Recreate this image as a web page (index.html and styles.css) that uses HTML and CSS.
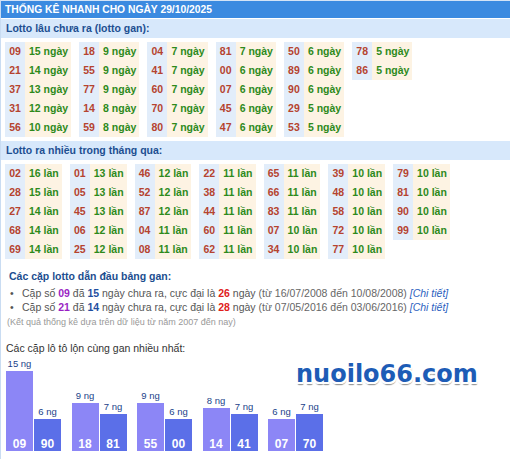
FILE: index.html
```html
<!DOCTYPE html>
<html lang="vi">
<head>
<meta charset="utf-8">
<title>Thống kê nhanh</title>
<link rel="stylesheet" href="styles.css">
</head>
<body>
<div class="page">
  <div class="hdr">THỐNG KÊ NHANH CHO NGÀY 29/10/2025</div>
  <div class="sub">Lotto lâu chưa ra (lotto gan):</div>
  <div class="blocks">
    <div class="blk"><span class="n">09</span><span class="v">15 ngày</span><span class="n">21</span><span class="v">14 ngày</span><span class="n">37</span><span class="v">13 ngày</span><span class="n">31</span><span class="v">12 ngày</span><span class="n">56</span><span class="v">10 ngày</span></div>
    <div class="blk"><span class="n">18</span><span class="v">9 ngày</span><span class="n">55</span><span class="v">9 ngày</span><span class="n">77</span><span class="v">9 ngày</span><span class="n">14</span><span class="v">8 ngày</span><span class="n">59</span><span class="v">8 ngày</span></div>
    <div class="blk"><span class="n">04</span><span class="v">7 ngày</span><span class="n">41</span><span class="v">7 ngày</span><span class="n">60</span><span class="v">7 ngày</span><span class="n">70</span><span class="v">7 ngày</span><span class="n">80</span><span class="v">7 ngày</span></div>
    <div class="blk"><span class="n">81</span><span class="v">7 ngày</span><span class="n">00</span><span class="v">6 ngày</span><span class="n">07</span><span class="v">6 ngày</span><span class="n">45</span><span class="v">6 ngày</span><span class="n">47</span><span class="v">6 ngày</span></div>
    <div class="blk"><span class="n">50</span><span class="v">6 ngày</span><span class="n">89</span><span class="v">6 ngày</span><span class="n">90</span><span class="v">6 ngày</span><span class="n">29</span><span class="v">5 ngày</span><span class="n">53</span><span class="v">5 ngày</span></div>
    <div class="blk"><span class="n">78</span><span class="v">5 ngày</span><span class="n">86</span><span class="v">5 ngày</span></div>
  </div>
  <div class="sub">Lotto ra nhiều trong tháng qua:</div>
  <div class="blocks">
    <div class="blk"><span class="n">02</span><span class="v">16 lần</span><span class="n">28</span><span class="v">15 lần</span><span class="n">27</span><span class="v">14 lần</span><span class="n">68</span><span class="v">14 lần</span><span class="n">69</span><span class="v">14 lần</span></div>
    <div class="blk"><span class="n">01</span><span class="v">13 lần</span><span class="n">05</span><span class="v">13 lần</span><span class="n">45</span><span class="v">13 lần</span><span class="n">06</span><span class="v">12 lần</span><span class="n">25</span><span class="v">12 lần</span></div>
    <div class="blk"><span class="n">46</span><span class="v">12 lần</span><span class="n">52</span><span class="v">12 lần</span><span class="n">87</span><span class="v">12 lần</span><span class="n">04</span><span class="v">11 lần</span><span class="n">08</span><span class="v">11 lần</span></div>
    <div class="blk"><span class="n">22</span><span class="v">11 lần</span><span class="n">38</span><span class="v">11 lần</span><span class="n">44</span><span class="v">11 lần</span><span class="n">60</span><span class="v">11 lần</span><span class="n">62</span><span class="v">11 lần</span></div>
    <div class="blk"><span class="n">65</span><span class="v">11 lần</span><span class="n">66</span><span class="v">11 lần</span><span class="n">83</span><span class="v">11 lần</span><span class="n">07</span><span class="v">10 lần</span><span class="n">34</span><span class="v">10 lần</span></div>
    <div class="blk"><span class="n">39</span><span class="v">10 lần</span><span class="n">48</span><span class="v">10 lần</span><span class="n">58</span><span class="v">10 lần</span><span class="n">72</span><span class="v">10 lần</span><span class="n">77</span><span class="v">10 lần</span></div>
    <div class="blk"><span class="n">79</span><span class="v">10 lần</span><span class="n">81</span><span class="v">10 lần</span><span class="n">90</span><span class="v">10 lần</span><span class="n">99</span><span class="v">10 lần</span></div>
  </div>
  <div class="lead">
    <div class="lead-title">Các cặp lotto dẫn đầu bảng gan:</div>
    <div class="li"><span class="dot">•</span>Cặp số <b class="p">09</b> đã <b class="b">15</b> ngày chưa ra, cực đại là <b class="r">26</b> ngày <span class="g">(từ 16/07/2008 đến 10/08/2008)</span> <i class="lk">[Chi tiết]</i></div>
    <div class="li"><span class="dot">•</span>Cặp số <b class="p">21</b> đã <b class="b">14</b> ngày chưa ra, cực đại là <b class="r">28</b> ngày <span class="g">(từ 07/05/2016 đến 03/06/2016)</span> <i class="lk">[Chi tiết]</i></div>
    <div class="note">(Kết quả thống kê dựa trên dữ liệu từ năm 2007 đến nay)</div>
  </div>
  <div class="pairs">
    <div class="pairs-title">Các cặp lô tô lộn cùng gan nhiều nhất:</div>
    <div class="chart">
      <div class="pair">
        <div class="col"><span class="lbl">15 ng</span><div class="bar a" style="height:80px">09</div></div>
        <div class="col"><span class="lbl">6 ng</span><div class="bar c" style="height:32px">90</div></div>
      </div>
      <div class="pair">
        <div class="col"><span class="lbl">9 ng</span><div class="bar a" style="height:48px">18</div></div>
        <div class="col"><span class="lbl">7 ng</span><div class="bar c" style="height:37px">81</div></div>
      </div>
      <div class="pair">
        <div class="col"><span class="lbl">9 ng</span><div class="bar a" style="height:48px">55</div></div>
        <div class="col"><span class="lbl">6 ng</span><div class="bar c" style="height:32px">00</div></div>
      </div>
      <div class="pair">
        <div class="col"><span class="lbl">8 ng</span><div class="bar a" style="height:43px">14</div></div>
        <div class="col"><span class="lbl">7 ng</span><div class="bar c" style="height:37px">41</div></div>
      </div>
      <div class="pair">
        <div class="col"><span class="lbl">6 ng</span><div class="bar a" style="height:32px">07</div></div>
        <div class="col"><span class="lbl">7 ng</span><div class="bar c" style="height:37px">70</div></div>
      </div>
    </div>
    <div class="logo">nuoilo66.com</div>
  </div>
</div>
</body>
</html>
```

FILE: styles.css
```css
html, body {
  margin: 0;
  padding: 0;
  background: #fff;
}

.page {
  font-family: "Liberation Sans", Arial, sans-serif;
  border-left: 1px solid #c9dcf2;
  border-top: 1px solid #d3e3f6;
  min-height: 458px;
}

.hdr {
  background: #3b8ae0;
  color: #fff;
  font-weight: bold;
  font-size: 10.3px;
  height: 17px;
  line-height: 17px;
  padding-left: 4px;
  margin-bottom: 1px;
}

.sub {
  background: #d7e8fb;
  color: #1d4f91;
  font-weight: bold;
  font-size: 10.5px;
  height: 19px;
  line-height: 19px;
  padding-left: 5px;
}

.blocks {
  display: flex;
  align-items: flex-start;
  gap: 8px;
  padding: 4px 4px;
}

.blk {
  display: grid;
  grid-template-columns: 20px auto;
  grid-auto-rows: 19px;
  font-size: 10.5px;
  font-weight: bold;
  line-height: 19px;
}

.n {
  background: #e2edfa;
  color: #b5432f;
  text-align: center;
}

.v {
  background: #fdf3e3;
  color: #2d8a1b;
  padding: 0 3px 0 4px;
  white-space: nowrap;
}

.lead {
  padding: 6px 0 0 8px;
  font-size: 10.5px;
  color: #555;
}

.lead-title {
  font-weight: bold;
  color: #1c4d8f;
  line-height: 14px;
}

.li {
  line-height: 14px;
  white-space: nowrap;
}

.lead-title + .li {
  margin-top: 3px;
}

.dot {
  display: inline-block;
  width: 13px;
  padding-left: 1px;
  box-sizing: border-box;
  color: #555;
}

.p { color: #9a1fc4; }
.b { color: #1f4fa0; }
.r { color: #e0201b; }
.g { color: #666; }
.lk { color: #2c5fc0; }

.note {
  font-size: 9px;
  color: #999;
  line-height: 14px;
  margin-top: 1px;
  margin-left: -2px;
}

.pairs {
  position: relative;
  padding-top: 12px;
}

.pairs-title {
  font-size: 10.5px;
  color: #333;
  line-height: 14px;
  padding-left: 5px;
}

.chart {
  display: flex;
  align-items: flex-end;
  gap: 10.5px;
  padding-left: 5px;
  margin-top: 3px;
}

.pair {
  display: flex;
  align-items: flex-end;
  gap: 1px;
}

.col {
  display: flex;
  flex-direction: column;
  align-items: center;
  width: 27px;
}

.lbl {
  font-size: 9.5px;
  line-height: 11px;
  color: #1a3f8a;
  margin-bottom: 2px;
  white-space: nowrap;
}

.bar {
  width: 27px;
  display: flex;
  align-items: flex-end;
  justify-content: center;
  color: #fff;
  font-weight: bold;
  font-size: 12px;
  line-height: 14px;
}

.bar.a { background: #8c86f6; }
.bar.c { background: #5b6fe8; }

.logo {
  position: absolute;
  left: 295px;
  top: 31px;
  font-family: "DejaVu Sans", sans-serif;
  font-weight: bold;
  font-size: 24px;
  line-height: 28px;
  color: #1d5cb6;
  text-shadow:
    0 -2px 0 #fff, 2px 0 0 #fff, -2px 0 0 #fff, 0 2px 0 #fff,
    1.5px 1.5px 0 #fff, -1.5px -1.5px 0 #fff, 1.5px -1.5px 0 #fff, -1.5px 1.5px 0 #fff,
    0 3px 1px #9a9a9a, 1px 3px 1px #9a9a9a;
}
```
